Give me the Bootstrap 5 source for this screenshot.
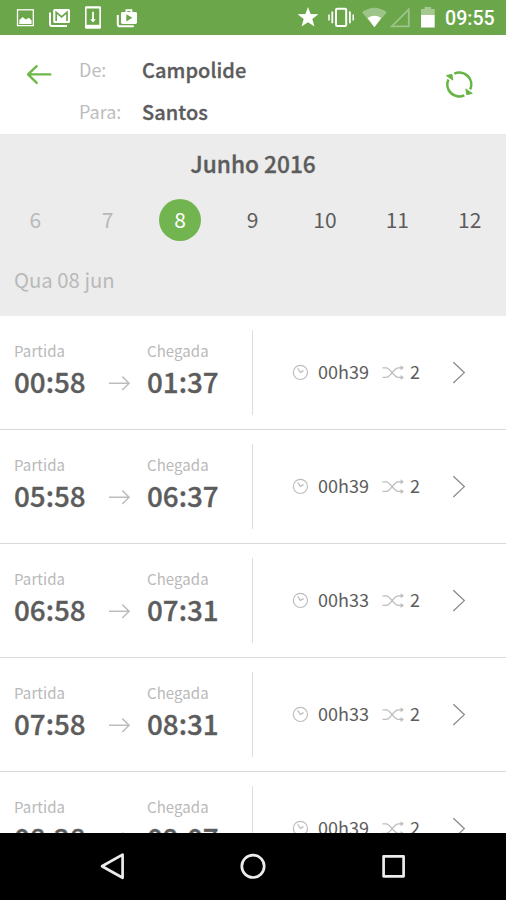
<!DOCTYPE html>
<html lang="pt">
<head>
<meta charset="utf-8">
<meta name="viewport" content="width=device-width, initial-scale=1">
<title>Horários</title>
<link href="https://cdn.jsdelivr.net/npm/bootstrap@5.3.0/dist/css/bootstrap.min.css" rel="stylesheet">
<style>
  body { font-family: "Noto Sans CJK SC", "Noto Sans", sans-serif; color: #5c5c5c; background: #fff; }
  svg { display: block; flex: none; }
  .screen { height: 900px; }
  .status { height: 35px; background: #6ba64a; padding-left: 16px; padding-right: 11px; }
  .clock { font: 500 19.6px/36px Roboto, sans-serif; width: 50px; margin-left: 9px; padding-top: 1px; }
  .trip-head { height: 99px; padding: 13px 32px 0 26px; }
  .trip-head .line { height: 42px; line-height: 42px; font-size: 18px; }
  .line .tag { width: 63px; color: #bdbdbd; }
  .line .place { font-weight: 500; font-size: 20px; padding-top: 1px; letter-spacing: .05px; }
  .place, .month, .hour { -webkit-text-stroke: .35px currentColor; }
  .days { height: 182px; background: #ececec; border-top: 1px solid #e8e8e8; }
  .month { font-size: 22.7px; font-weight: 500; line-height: 30px; padding-top: 14px; }
  .day { font-size: 21px; line-height: 40px; height: 42px; }
  .week { margin-top: 20px; height: 42px; margin-left: -1px; }
  .past, .chosen { color: #b9b9b9; }
  .chosen { font-size: 20.3px; line-height: 30px; padding: 23px 0 0 14px; }
  .picked { width: 42px; height: 42px; background: #72b550; color: #fff; }
  .trip { height: 114px; border-bottom: 1px solid #d9d9d9; padding-left: 14px; flex: none; }
  .times { width: 239px; height: 85px; margin-top: 14px; border-right: 1.5px solid #dedede; }
  .label { font-size: 15px; line-height: 20px; padding-top: 11px; color: #b9b9b9; letter-spacing: .08px; }
  .hour { font-size: 27.8px; line-height: 40px; font-weight: 500; }
  .from { width: 94px; }
  .go { margin-top: 45px; }
  .info { font-size: 18px; line-height: 24px; height: 26px; margin-top: 43px; padding-left: 39px; }
  .info span { height: 26px; }
  .dur { width: 73px; padding-left: 9px; }
  .swaps { width: 48px; padding-left: 6px; }
  .softkeys { height: 67px; background: #000; flex: none; }
</style>
</head>
<body>
<svg width="0" height="0" class="position-absolute">
  <defs>
    <symbol id="arrow" viewBox="108 375 23 16"><path d="M109 383.3h20M122.3 376.6l6.8 6.7-6.8 6.7" fill="none" stroke="#bdbdbd" stroke-width="1.5"/></symbol>
    <symbol id="time" viewBox="292 364 17 17"><g fill="none" stroke="#bdbdbd" stroke-width="1.2"><circle cx="300.4" cy="372.4" r="7.1"/><path d="M297.7 368.2l2.6 4.2 3.3-1.8"/></g></symbol>
    <symbol id="shuffle" viewBox="382 364 22 17"><g fill="none" stroke="#bdbdbd" stroke-width="1.3"><path d="M382.5 367.8h3.5c5 0 7 9.6 12.5 9.6h4M382.5 377.4h3.5c5 0 7-9.6 12.5-9.6h4"/></g><path d="M400.6 365.3l3.4 2.5-3.4 2.5zM400.6 374.9l3.4 2.5-3.4 2.5z" fill="#bdbdbd"/></symbol>
    <symbol id="next" viewBox="452 361 14 23"><path d="M453.3 362.2l11 10.4-11 10.4" fill="none" stroke="#8b8b8b" stroke-width="1.3"/></symbol>
  </defs>
</svg>
<div class="screen d-flex flex-column overflow-hidden">
  <div class="status d-flex text-white flex-shrink-0">
    <svg width="33" height="36" viewBox="16 0 33 36"><rect x="17.5" y="9.8" width="15.8" height="15.8" fill="none" stroke="#fff" stroke-width="1.3"/><path d="M19.3 24v-4l3.4-3 3 2.6 3.3-1.8 2.6 2.6V24z" fill="#fff"/></svg>
    <svg width="35" height="36" viewBox="49 0 35 36"><path d="M50 12.5V24q0 2 2 2h15" fill="none" stroke="#fff" stroke-width="2"/><rect x="53.2" y="9" width="16.8" height="14" rx="1.6" fill="#fff"/><path d="M56.2 21v-8.6l5.4 4.6 5.4-4.6V21" fill="none" stroke="#6ba64a" stroke-width="1.7"/></svg>
    <svg width="31" height="36" viewBox="84 0 31 36"><rect x="85" y="6.2" width="16" height="22.6" rx="1.2" fill="#fff"/><path d="M86.6 8.5h12.7v16.3H86.6z" fill="#6ba64a"/><path d="M92.1 11.8h1.8v7.4h1.8L93 22.6l-2.7-3.4h1.8z" fill="#fff"/></svg>
    <svg width="24" height="36" viewBox="115 0 24 36"><path d="M117.8 15v9.2q0 2.1 2 2.1h14" fill="none" stroke="#fff" stroke-width="2"/><rect x="121" y="12" width="16" height="12" rx="1.4" fill="#fff"/><path d="M126.4 12.5v-2.3h5v2.3" fill="none" stroke="#fff" stroke-width="1.8"/><path d="M126.3 14.2l6 3.6-6 3.6z" fill="#6ba64a"/></svg>
    <svg class="ms-auto" width="30" height="36" viewBox="297 0 30 36"><path d="M308 7l2.6 7 7.8.3-6.1 4.7 2.2 7.6-6.5-4.4-6.5 4.4 2.2-7.6-6.1-4.7 7.8-.3z" fill="#fff"/></svg>
    <svg width="34" height="36" viewBox="327 0 34 36"><g fill="none" stroke="#fff"><rect x="336" y="8.7" width="10.2" height="17.2" rx="1.2" stroke-width="2"/><path d="M332.3 11.6v11.6M349.9 11.6v11.6" stroke-width="1.8"/><path d="M329 14.4v6M353.2 14.4v6" stroke-width="1.5"/></g></svg>
    <svg width="29" height="36" viewBox="361 0 29 36"><path d="M374.4 27.3L362 12.2q12.4-9 24.8 0z" fill="#fff" opacity=".35"/><path d="M374.4 27.3L367.6 18q6.8-4.4 13.6 0z" fill="#fff"/></svg>
    <svg width="30" height="36" viewBox="390 0 30 36"><path d="M391.8 26.4h17V9.4z" fill="none" stroke="#fff" stroke-width="1.8" opacity=".35"/></svg>
    <svg width="16" height="36" viewBox="420 0 16 36"><path d="M421 15V9h3.6V7h6.4v2h3.7v6z" fill="#fff" opacity=".4"/><path d="M421 15h13.7v12.5H421z" fill="#fff"/></svg>
    <div class="clock">09:55</div>
  </div>

  <header class="trip-head d-flex flex-shrink-0">
    <svg width="53" height="50" viewBox="26 48 53 50"><path d="M50.3 74.4H28.4M36.7 66.2l-8.7 8.2 8.7 8.5" fill="none" stroke="#6fb84a" stroke-width="2.4" stroke-linecap="round" stroke-linejoin="round"/></svg>
    <div>
      <div class="line d-flex"><span class="tag">De:</span><span class="place">Campolide</span></div>
      <div class="line d-flex"><span class="tag">Para:</span><span class="place">Santos</span></div>
    </div>
    <svg class="ms-auto" width="30" height="60" viewBox="444 48 30 60"><g fill="none" stroke="#66b544" stroke-width="2.6"><path d="M454.3 73.6A12 12 0 0 1 470.2 89.5"/><path d="M464.3 95.4A12 12 0 0 1 448.4 79.5"/></g><path d="M446.3 75.6l5.6-1.3.9 5.8zM472.3 93.4l-5.6 1.3-.9-5.8z" fill="#66b544" stroke="#66b544" stroke-width=".9"/></svg>
  </header>

  <section class="days flex-shrink-0">
    <div class="month text-center">Junho 2016</div>
    <div class="week row g-0 row-cols-7 text-center">
      <div class="col day past">6</div><div class="col day past">7</div>
      <div class="col day"><div class="picked rounded-circle mx-auto">8</div></div>
      <div class="col day">9</div><div class="col day">10</div><div class="col day">11</div><div class="col day">12</div>
    </div>
    <div class="chosen">Qua 08 jun</div>
  </section>

  <main class="flex-grow-1 overflow-hidden d-flex flex-column" id="trips"></main>

  <nav class="softkeys d-flex">
    <svg width="506" height="67" viewBox="0 833 506 67" fill="none" stroke="#ececec" stroke-width="2.7" stroke-linejoin="round"><path d="M122.6 854.6v23.2L102 866.2z"/><circle cx="253" cy="866.3" r="11.2"/><rect x="383.6" y="856.3" width="20" height="20"/></svg>
  </nav>
</div>
<script src="https://cdn.jsdelivr.net/npm/bootstrap@5.3.0/dist/js/bootstrap.bundle.min.js"></script>
<script>
  const trips = [["00:58","01:37","00h39"],["05:58","06:37","00h39"],["06:58","07:31","00h33"],["07:58","08:31","00h33"],["08:28","09:07","00h39"]];
  document.getElementById("trips").innerHTML = trips.map(([a, b, d]) => `
    <div class="trip d-flex">
      <div class="times d-flex">
        <div class="from"><div class="label">Partida</div><div class="hour">${a}</div></div>
        <svg class="go" width="23" height="16"><use href="#arrow"/></svg>
        <div class="ps-3"><div class="label">Chegada</div><div class="hour">${b}</div></div>
      </div>
      <div class="info d-flex align-items-center">
        <svg width="17" height="17"><use href="#time"/></svg><span class="dur">${d}</span>
        <svg width="22" height="17"><use href="#shuffle"/></svg><span class="swaps">2</span>
        <svg width="14" height="23"><use href="#next"/></svg>
      </div>
    </div>`).join("");
</script>
</body>
</html>
